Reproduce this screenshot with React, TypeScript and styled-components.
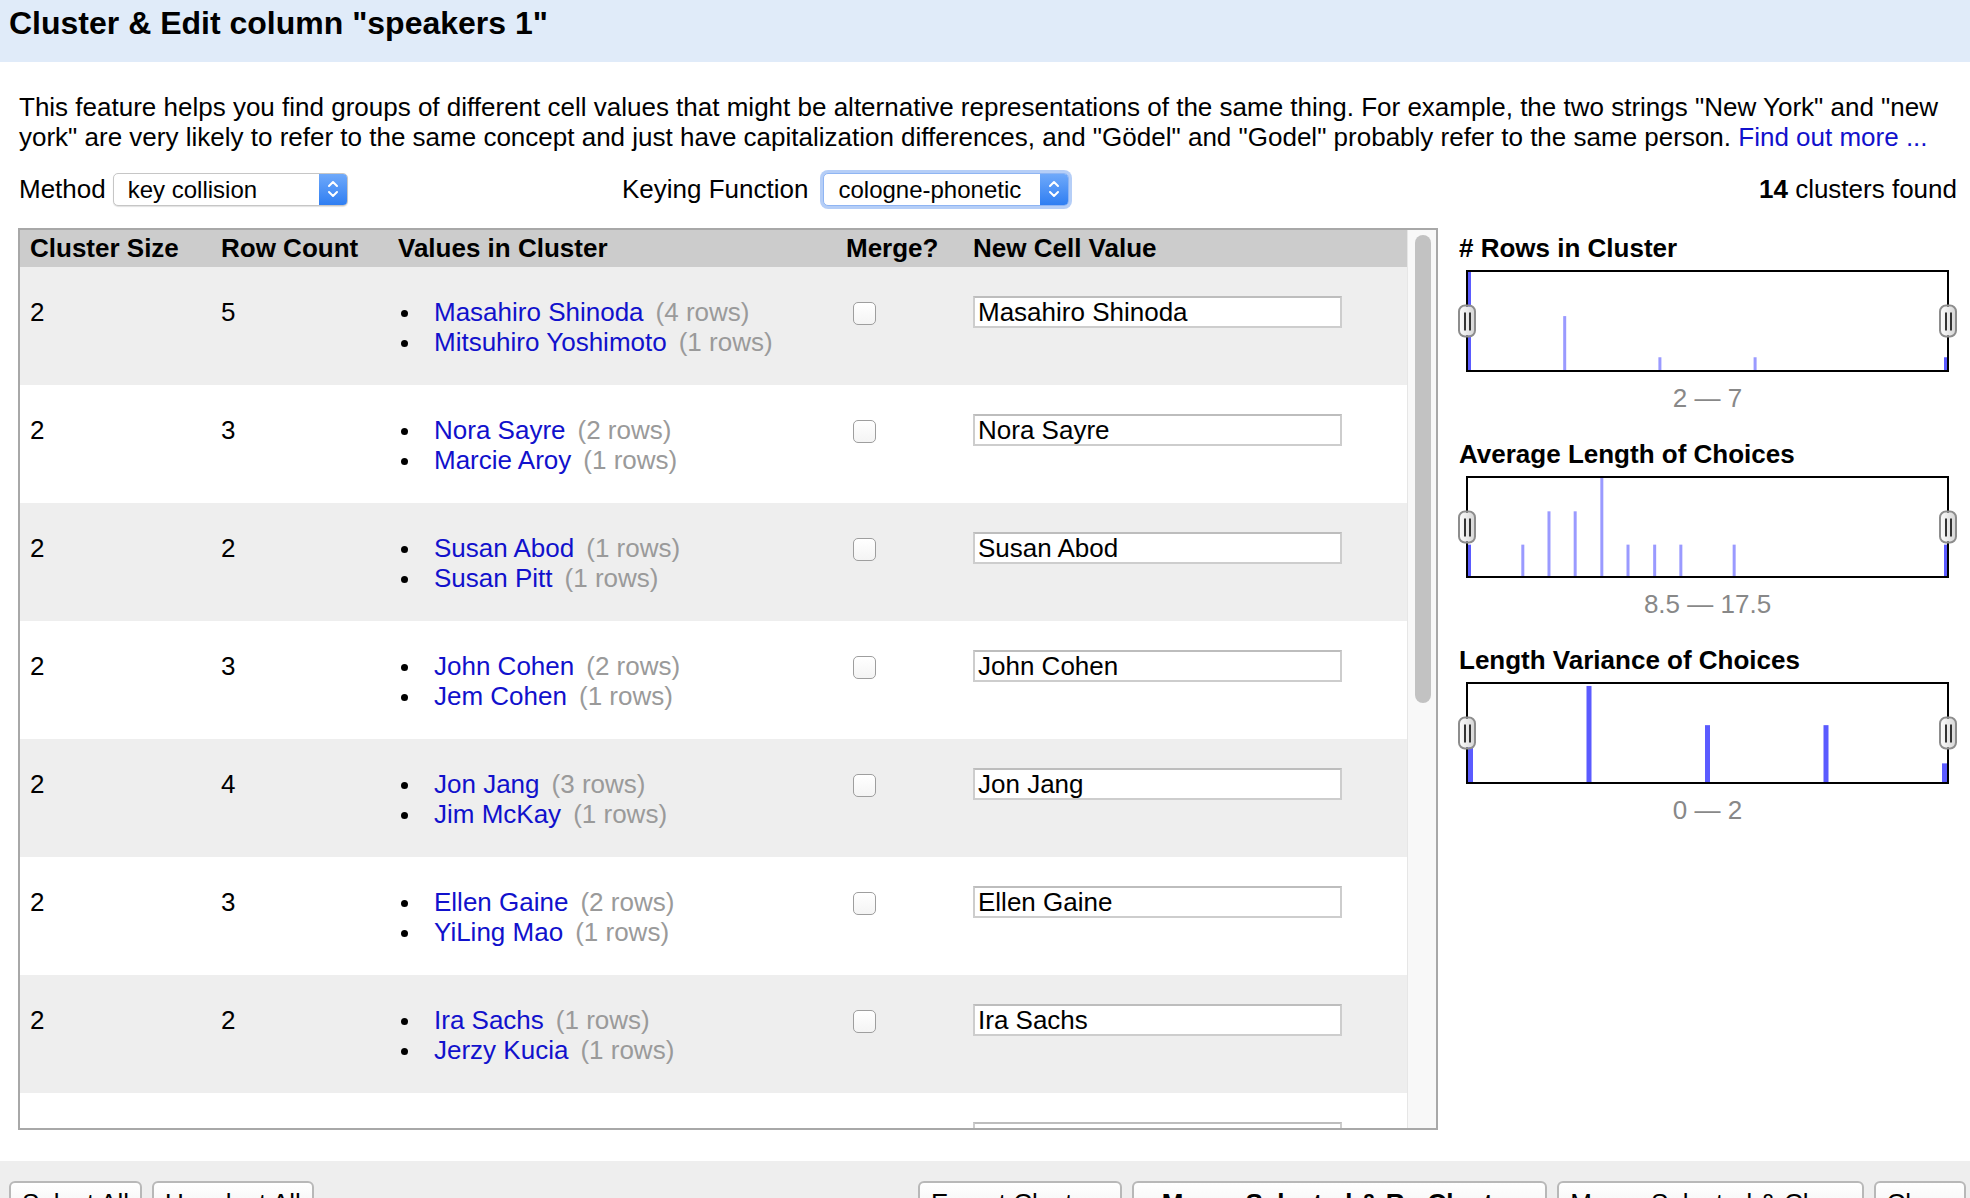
import { createGlobalStyle, styled } from 'styled-components';

type Choice = { name: string; rows: number };
type Cluster = { size: number; rowCount: number; choices: Choice[]; value: string };
type Bar = { x: number; h: number; dark?: boolean };
type Chart = { title: string; range: string; barWidth: number; bars: Bar[] };

const clusters: Cluster[] = [
  { size: 2, rowCount: 5, value: "Masahiro Shinoda", choices: [{ name: "Masahiro Shinoda", rows: 4 }, { name: "Mitsuhiro Yoshimoto", rows: 1 }] },
  { size: 2, rowCount: 3, value: "Nora Sayre", choices: [{ name: "Nora Sayre", rows: 2 }, { name: "Marcie Aroy", rows: 1 }] },
  { size: 2, rowCount: 2, value: "Susan Abod", choices: [{ name: "Susan Abod", rows: 1 }, { name: "Susan Pitt", rows: 1 }] },
  { size: 2, rowCount: 3, value: "John Cohen", choices: [{ name: "John Cohen", rows: 2 }, { name: "Jem Cohen", rows: 1 }] },
  { size: 2, rowCount: 4, value: "Jon Jang", choices: [{ name: "Jon Jang", rows: 3 }, { name: "Jim McKay", rows: 1 }] },
  { size: 2, rowCount: 3, value: "Ellen Gaine", choices: [{ name: "Ellen Gaine", rows: 2 }, { name: "YiLing Mao", rows: 1 }] },
  { size: 2, rowCount: 2, value: "Ira Sachs", choices: [{ name: "Ira Sachs", rows: 1 }, { name: "Jerzy Kucia", rows: 1 }] },
  { size: 2, rowCount: 2, value: "Andrea Hull", choices: [{ name: "Andrea Hull", rows: 1 }, { name: "Andrew Hull", rows: 1 }] },
];

const charts: Chart[] = [
  {
    title: "# Rows in Cluster", range: "2 \u2014 7", barWidth: 3,
    bars: [{ x: 0, h: 1, dark: true }, { x: 0.2, h: 0.55 }, { x: 0.4, h: 0.13 }, { x: 0.6, h: 0.13 }, { x: 1, h: 0.13, dark: true }],
  },
  {
    title: "Average Length of Choices", range: "8.5 \u2014 17.5", barWidth: 3,
    bars: [
      { x: 0, h: 0.32, dark: true }, { x: 0.112, h: 0.32 }, { x: 0.167, h: 0.66 }, { x: 0.222, h: 0.66 },
      { x: 0.278, h: 1 }, { x: 0.333, h: 0.32 }, { x: 0.389, h: 0.32 }, { x: 0.444, h: 0.32 },
      { x: 0.556, h: 0.32 }, { x: 1, h: 0.32, dark: true },
    ],
  },
  {
    title: "Length Variance of Choices", range: "0 \u2014 2", barWidth: 5,
    bars: [{ x: 0, h: 0.36, dark: true }, { x: 0.25, h: 0.98, dark: true }, { x: 0.5, h: 0.58, dark: true }, { x: 0.75, h: 0.58, dark: true }, { x: 1, h: 0.19, dark: true }],
  },
];

const SelectArrows = () => (
  <svg width="14" height="22" viewBox="0 0 14 22">
    <path d="M3 8 L7 4 L11 8" fill="none" stroke="#fff" strokeWidth="2" strokeLinecap="round" strokeLinejoin="round" />
    <path d="M3 14 L7 18 L11 14" fill="none" stroke="#fff" strokeWidth="2" strokeLinecap="round" strokeLinejoin="round" />
  </svg>
);

const Histogram = ({ chart }: { chart: Chart }) => {
  const w = 479;
  const h = 98;
  return (
    <ChartBox>
      <svg width="100%" height="100%" viewBox={`0 0 ${w} ${h}`} preserveAspectRatio="none">
        {chart.bars.map((b, i) => (
          <rect
            key={i}
            x={b.x * (w - chart.barWidth)}
            y={h * (1 - b.h)}
            width={chart.barWidth}
            height={h * b.h}
            fill={b.dark ? "#5b5bff" : "#9a9aff"}
          />
        ))}
      </svg>
      <Handle $side="left"><Grip /></Handle>
      <Handle $side="right"><Grip /></Handle>
    </ChartBox>
  );
};

function App() {
  return (
    <Page>
      <GlobalStyle />
      <TitleBar>Cluster &amp; Edit column "speakers 1"</TitleBar>
      <Body>
        <Description>
          This feature helps you find groups of different cell values that might be alternative representations of the same thing. For example, the two strings "New York" and "new york" are very likely to refer to the same concept and just have capitalization differences, and "Gödel" and "Godel" probably refer to the same person. <Link>Find out more ...</Link>
        </Description>
        <Controls>
          <MethodGroup>
            <Label>Method</Label>
            <FakeSelect $width={235}>
              <SelectText>key collision</SelectText>
              <SelectButton><SelectArrows /></SelectButton>
            </FakeSelect>
          </MethodGroup>
          <Label $gap={15}>Keying Function</Label>
          <FakeSelect $width={246} $focused>
            <SelectText>cologne-phonetic</SelectText>
            <SelectButton><SelectArrows /></SelectButton>
          </FakeSelect>
          <Found><b>14</b> clusters found</Found>
        </Controls>
        <Main>
          <TablePanel>
            <TableContent>
              <HeaderRow>
                <div>Cluster Size</div>
                <div>Row Count</div>
                <div>Values in Cluster</div>
                <div>Merge?</div>
                <div>New Cell Value</div>
              </HeaderRow>
              {clusters.map((c, i) => (
                <Row key={i} $alt={i % 2 === 0}>
                  <NumCell>{c.size}</NumCell>
                  <NumCell>{c.rowCount}</NumCell>
                  <ValueList>
                    {c.choices.map((ch) => (
                      <ValueItem key={ch.name}>
                        <Bullet />
                        <Link>{ch.name}</Link>
                        <RowsNote>({ch.rows} rows)</RowsNote>
                      </ValueItem>
                    ))}
                  </ValueList>
                  <CheckCell><CheckBox type="checkbox" /></CheckCell>
                  <InputCell><ValueInput defaultValue={c.value} /></InputCell>
                </Row>
              ))}
            </TableContent>
            <ScrollTrack><ScrollThumb /></ScrollTrack>
          </TablePanel>
          <SidePanel>
            {charts.map((chart) => (
              <ChartSection key={chart.title}>
                <ChartTitle>{chart.title}</ChartTitle>
                <Histogram chart={chart} />
                <RangeLabel>{chart.range}</RangeLabel>
              </ChartSection>
            ))}
          </SidePanel>
        </Main>
      </Body>
      <BottomBar>
        <ButtonGroup>
          <Button>Select All</Button>
          <Button>Unselect All</Button>
        </ButtonGroup>
        <ButtonGroup>
          <Button>Export Clusters</Button>
          <Button $primary>Merge Selected &amp; Re-Cluster</Button>
          <Button>Merge Selected &amp; Close</Button>
          <Button>Close</Button>
        </ButtonGroup>
      </BottomBar>
    </Page>
  );
}

export default App;

const GlobalStyle = createGlobalStyle`
  html, body {
    margin:0;
    padding:0;
    overflow:hidden;
    background:#fff;
  }
  body {
    font-family: "Liberation Sans", Arial, Helvetica, sans-serif;
    color:#000;
  }
  * { box-sizing:border-box; }
`;

const Page = styled.div`
  width:1970px;
  height:1198px;
  overflow:hidden;
  display:flex;
  flex-direction:column;
  font-size:26px;
  line-height:30px;
`;

const TitleBar = styled.div`
  flex-shrink:0;
  height:62px;
  padding:4px 9px 0;
  background:#e0ebf9;
  font-size:32px;
  font-weight:700;
  line-height:38px;
`;

const Body = styled.div`
  flex-shrink:0;
  padding:0 13px 0 18px;
`;

const Description = styled.div`
  margin-top:30px;
  padding-left:1px;
`;

const Link = styled.span`
  color:#1111cc;
  cursor:pointer;
`;

const Controls = styled.div`
  display:flex;
  align-items:center;
  height:34px;
  margin-top:20px;
`;

const MethodGroup = styled.div`
  display:flex;
  align-items:center;
  width:604px;
  padding-left:1px;
`;

const Label = styled.span<{ $gap?: number }>`
  margin-right:${(p) => p.$gap ?? 7}px;
`;

const FakeSelect = styled.div<{ $width: number; $focused?: boolean }>`
  display:flex;
  align-items:stretch;
  width:${(p) => p.$width}px;
  height:33px;
  border:1px solid ${(p) => (p.$focused ? "#8fb5f3" : "#c6c6c6")};
  border-radius:5px;
  background:#fff;
  box-shadow:${(p) => (p.$focused ? "0 0 0 3px rgba(120,165,240,0.55)" : "0 1px 1px rgba(0,0,0,0.12)")};
  font-size:24px;
  line-height:31px;
`;

const SelectText = styled.span`
  flex:1;
  padding-left:14px;
`;

const SelectButton = styled.span`
  width:28px;
  display:flex;
  align-items:center;
  justify-content:center;
  border-radius:0 4px 4px 0;
  background:linear-gradient(#6fa9fa, #2f7ef2);
`;

const Found = styled.div`
  margin-left:auto;
`;

const Main = styled.div`
  display:flex;
  margin-top:22px;
`;

const TablePanel = styled.div`
  display:flex;
  width:1420px;
  height:902px;
  border:2px solid #a8a8a8;
`;

const TableContent = styled.div`
  flex:1;
  overflow:hidden;
`;

const gridColumns = "191px 177px 448px 127px 1fr";

const HeaderRow = styled.div`
  display:grid;
  grid-template-columns:${gridColumns};
  padding-left:10px;
  height:37px;
  line-height:37px;
  background:#cccccc;
  font-weight:700;
`;

const Row = styled.div<{ $alt: boolean }>`
  display:grid;
  grid-template-columns:${gridColumns};
  padding-left:10px;
  height:118px;
  background:${(p) => (p.$alt ? "#eeeeee" : "#ffffff")};
`;

const NumCell = styled.div`
  padding-top:30px;
`;

const ValueList = styled.ul`
  list-style:none;
  margin:0;
  padding:30px 0 0;
`;

const ValueItem = styled.li`
  display:flex;
  align-items:center;
  height:30px;
  white-space:nowrap;
`;

const Bullet = styled.span`
  width:7px;
  height:7px;
  margin:2px 26px 0 3px;
  border-radius:50%;
  background:#000;
`;

const RowsNote = styled.span`
  margin-left:12px;
  color:#9a9a9a;
`;

const CheckCell = styled.div`
  padding:35px 0 0 7px;
`;

const CheckBox = styled.input`
  appearance:none;
  display:block;
  width:23px;
  height:23px;
  margin:0;
  border:1px solid #9e9e9e;
  border-radius:5px;
  background:linear-gradient(#fff, #f4f4f4);
`;

const InputCell = styled.div`
  padding-top:29px;
`;

const ValueInput = styled.input`
  display:block;
  width:369px;
  height:32px;
  padding:0 3px;
  border:2px solid #cdcdcd;
  border-top-color:#bdbdbd;
  font-family:inherit;
  font-size:26px;
  color:#000;
  background:#fff;
  outline:none;
`;

const ScrollTrack = styled.div`
  width:29px;
  flex-shrink:0;
  padding:5px 0 0 7px;
  background:#f8f8f8;
  border-left:1px solid #e6e6e6;
`;

const ScrollThumb = styled.div`
  width:16px;
  height:468px;
  border-radius:8px;
  background:#c2c2c2;
`;

const SidePanel = styled.div`
  flex:1;
  margin-left:21px;
  padding-top:5px;
`;

const ChartSection = styled.div`
  margin-bottom:26px;
`;

const ChartTitle = styled.div`
  font-weight:700;
`;

const ChartBox = styled.div`
  position:relative;
  width:483px;
  height:102px;
  margin:7px 0 0 7px;
  border:2px solid #000;
  background:#fff;
  svg { display:block; }
`;

const Handle = styled.div<{ $side: "left" | "right" }>`
  position:absolute;
  top:50%;
  ${(p) => p.$side}:-10px;
  width:18px;
  height:33px;
  transform:translateY(-50%);
  display:flex;
  align-items:center;
  justify-content:center;
  border:2px solid #8d8d8d;
  border-radius:7px;
  background:linear-gradient(to right, #fafafa, #d8d8d8);
`;

const Grip = styled.span`
  width:7px;
  height:18px;
  border-left:2px solid #333;
  border-right:2px solid #333;
`;

const RangeLabel = styled.div`
  width:483px;
  margin:11px 0 0 7px;
  text-align:center;
  color:#888;
`;

const BottomBar = styled.div`
  display:flex;
  justify-content:space-between;
  margin-top:31px;
  flex:1;
  min-height:0;
  padding:20px 4px 0 9px;
  background:#eeeeee;
`;

const ButtonGroup = styled.div`
  display:flex;
  gap:10px;
  align-items:flex-start;
`;

const Button = styled.button<{ $primary?: boolean }>`
  flex-shrink:0;
  padding:4px ${(p) => (p.$primary ? 28 : 11)}px;
  height:44px;
  border:2px solid #b8b8b8;
  border-radius:6px;
  background:linear-gradient(#ffffff, #f0f0f0);
  font-family:inherit;
  font-size:26px;
  line-height:30px;
  font-weight:${(p) => (p.$primary ? 700 : 400)};
  color:#000;
`;
